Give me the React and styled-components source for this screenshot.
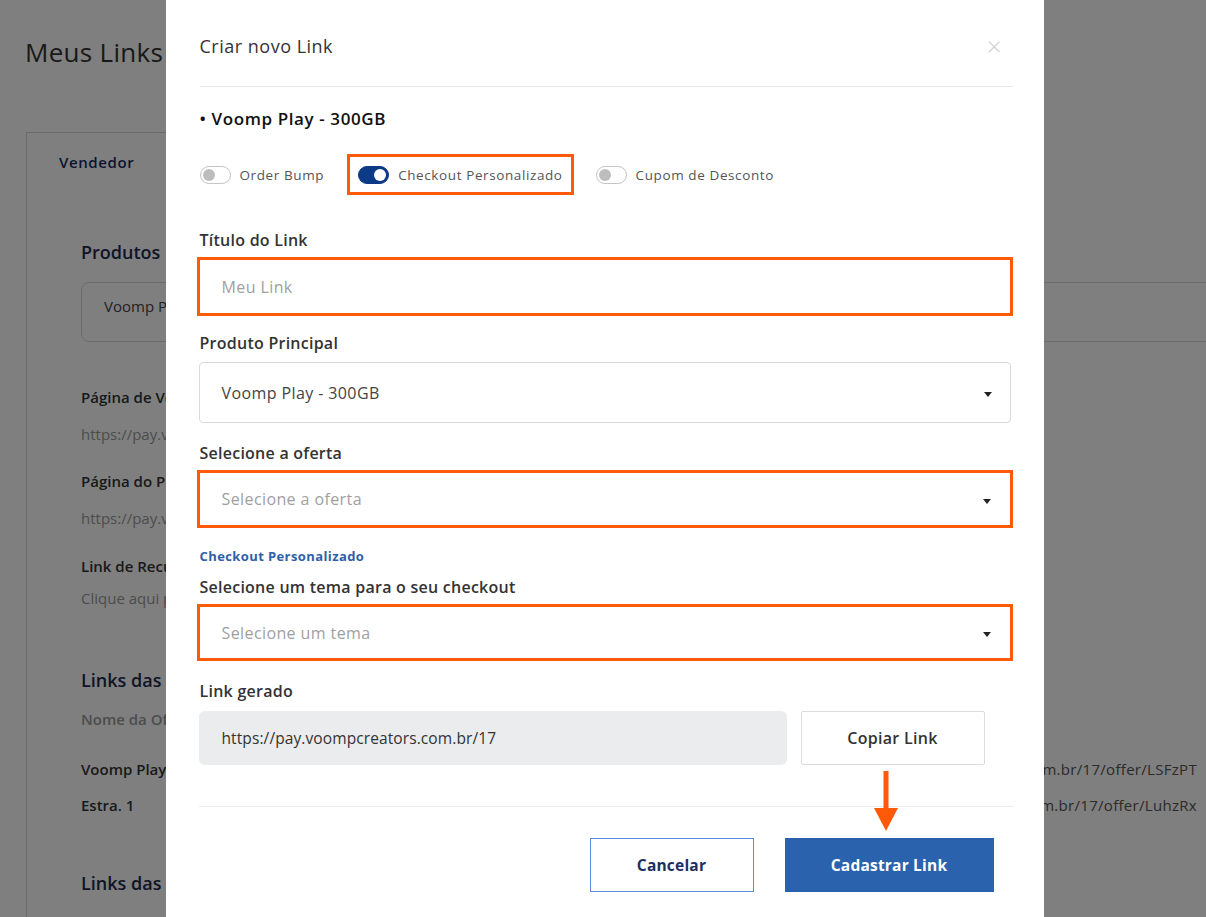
import React from "react";
import styled, { createGlobalStyle } from "styled-components";

const GlobalStyle = createGlobalStyle`
  html, body {
    margin: 0;
    padding: 0;
    height: 100%;
    overflow: hidden;
  }
  body {
    font-family: "Open Sans", "Noto Sans", sans-serif;
    background: #fff;
    color: #333;
  }
  * {
    box-sizing: border-box;
  }
`;

/* ---------- background page ---------- */

const Page = styled.div`
  width: 1240px;
  padding: 32px 0 0 25px;
`;

const PageTitle = styled.h1`
  margin: 0;
  font-size: 26px;
  font-weight: 500;
  line-height: 40px;
  color: #333;
  letter-spacing: 0.3px;
`;

const Card = styled.div`
  margin: 60px 0 0 1px;
  border-left: 1px solid #d6d6d6;
  height: 900px;
`;

const TabBar = styled.div`
  border-top: 1px solid #d6d6d6;
  width: 140px;
  padding: 19px 0 0 32px;
  font-size: 15px;
  font-weight: 600;
  line-height: 20px;
  letter-spacing: 0.6px;
  color: #142c66;
`;

const CardBody = styled.div`
  padding: 68px 0 0 54px;
`;

const SectionTitle = styled.div`
  font-size: 18px;
  font-weight: 600;
  line-height: 24px;
  color: #1d2b4f;
  margin-top: ${(p) => p.$top || 0}px;
`;

const BgSelect = styled.div`
  margin-top: 18px;
  height: 60px;
  border: 1px solid #d6d6d6;
  border-radius: 8px;
  display: flex;
  align-items: center;
  padding: 0 22px 12px;
  font-size: 15px;
  color: #444;
`;

const BgLabel = styled.div`
  font-size: 15px;
  font-weight: 600;
  line-height: 20px;
  color: ${(p) => p.$color || "#333"};
  margin-top: ${(p) => p.$top || 0}px;
`;

const BgValue = styled.div`
  font-size: 15px;
  line-height: 20px;
  color: #999;
  margin-top: ${(p) => p.$top || 0}px;
`;

const BgRow = styled.div`
  display: flex;
  justify-content: space-between;
  width: 1116px;
  font-size: 15px;
  line-height: 20px;
  margin-top: ${(p) => p.$top || 0}px;
`;

const BgCell = styled.span`
  font-weight: 600;
  color: #333;
`;

const BgUrl = styled.span`
  color: #555;
  letter-spacing: 0.3px;
`;

/* ---------- modal ---------- */

const Overlay = styled.div`
  position: fixed;
  inset: 0;
  background: rgba(0, 0, 0, 0.5);
  display: flex;
  justify-content: center;
  align-items: stretch;
`;

const Modal = styled.div`
  width: 878px;
  margin-left: 3px;
  background: #fff;
  padding: 0 31px 0 34px;
`;

const Header = styled.div`
  display: flex;
  justify-content: space-between;
  align-items: center;
  padding: 34px 0 28px;
  border-bottom: 1px solid #e8e8e8;
`;

const Title = styled.h2`
  margin: 0;
  font-size: 18px;
  font-weight: 500;
  line-height: 24px;
  letter-spacing: 0.5px;
  color: #333;
`;

const Close = styled.span`
  font-size: 26px;
  line-height: 24px;
  color: #d0d0d0;
  margin-right: 11px;
  font-weight: 300;
`;

const Product = styled.div`
  margin-top: 21px;
  font-size: 17px;
  font-weight: 600;
  line-height: 22px;
  letter-spacing: 0.6px;
  color: #111;
`;

const ToggleRow = styled.div`
  margin-top: 24px;
  display: flex;
  align-items: center;
  gap: 22px;
  height: 41px;
`;

const ToggleItem = styled.label`
  display: flex;
  align-items: center;
  gap: 9px;
  height: 41px;
  font-size: 13.5px;
  color: #555;
  letter-spacing: 0.6px;
  ${(p) =>
    p.$mark &&
    `
    border: 3px solid #ff5a0a;
    padding: 0 8px 0 8px;
    margin-left: 1px;
  `}
`;

const Switch = styled.span`
  position: relative;
  width: 31px;
  height: 18px;
  border-radius: 9px;
  border: 1px solid ${(p) => (p.$on ? "#0c3a86" : "#c4c4c4")};
  background: ${(p) => (p.$on ? "#0c3a86" : "#fff")};
  flex-shrink: 0;

  &::after {
    content: "";
    position: absolute;
    top: 2px;
    left: ${(p) => (p.$on ? "15px" : "2px")};
    width: 12px;
    height: 12px;
    border-radius: 50%;
    background: ${(p) => (p.$on ? "#fff" : "#bdbdbd")};
  }
`;

const Label = styled.div`
  font-size: 16px;
  font-weight: 600;
  line-height: 20px;
  letter-spacing: 0.25px;
  color: #333;
  margin-top: ${(p) => p.$top}px;
  margin-bottom: ${(p) => p.$bottom}px;
`;

const Field = styled.div`
  display: flex;
  align-items: center;
  justify-content: space-between;
  height: ${(p) => p.$h}px;
  font-size: 16px;
  letter-spacing: 0.4px;
  color: ${(p) => (p.$empty ? "#a0a0a0" : "#444")};
  ${(p) =>
    p.$mark
      ? `
    margin: 0 0 0 -3px;
    border: 3px solid #ff5a0a;
    padding: 0 19px 0 22px;
  `
      : `
    margin: 0 2px 0 -1px;
    border: 1px solid #d9d9d9;
    border-radius: 4px;
    padding: 0 18px 0 22px;
  `}
`;

const Caret = styled.span`
  width: 0;
  height: 0;
  border-left: 4.5px solid transparent;
  border-right: 4.5px solid transparent;
  border-top: 5px solid #222;
  margin-top: 4px;
`;

const SubLink = styled.div`
  margin-top: 20px;
  font-size: 13px;
  font-weight: 700;
  line-height: 16px;
  letter-spacing: 0.4px;
  color: #2f5fa8;
`;

const LinkRow = styled.div`
  position: relative;
  display: flex;
  gap: 14px;
`;

const GeneratedLink = styled.div`
  width: 588px;
  height: 54px;
  margin-left: -1px;
  background: #ebeced;
  border-radius: 6px;
  display: flex;
  align-items: center;
  padding: 0 23px;
  font-size: 15.5px;
  letter-spacing: 0.1px;
  color: #333;
`;

const CopyButton = styled.button`
  width: 184px;
  height: 54px;
  background: #fff;
  border: 1px solid #dcdcdc;
  border-radius: 2px;
  font-family: inherit;
  font-size: 16px;
  font-weight: 600;
  letter-spacing: 0.3px;
  color: #333;
`;

const Arrow = styled.svg`
  position: absolute;
  left: 674px;
  top: 60px;
`;

const Divider = styled.div`
  margin: 41px 0 0 -1px;
  border-top: 1px solid #ececec;
`;

const Footer = styled.div`
  margin-top: 31px;
  display: flex;
  justify-content: flex-end;
  gap: 31px;
  padding-right: 19px;
`;

const Button = styled.button`
  height: 54px;
  width: ${(p) => p.$w}px;
  font-family: inherit;
  font-size: 15.5px;
  font-weight: 700;
  letter-spacing: 0.2px;
  border-radius: 0;
  border: 1px solid ${(p) => (p.$primary ? "#2b62ad" : "#5b8ad6")};
  background: ${(p) => (p.$primary ? "#2b62ad" : "#fff")};
  color: ${(p) => (p.$primary ? "#fff" : "#1b2f5f")};
`;

const toggles = [
  { label: "Order Bump", on: false },
  { label: "Checkout Personalizado", on: true, mark: true },
  { label: "Cupom de Desconto", on: false },
];

export default function App() {
  return (
    <>
      <GlobalStyle />
      <Page>
        <PageTitle>Meus Links</PageTitle>
        <Card>
          <TabBar>Vendedor</TabBar>
          <CardBody>
            <SectionTitle>Produtos</SectionTitle>
            <BgSelect>Voomp Play - 300GB</BgSelect>
            <BgLabel $top={45}>Página de Vendas</BgLabel>
            <BgValue $top={17}>https://pay.voompcreators.com.br/17</BgValue>
            <BgLabel $top={27}>Página do Produto</BgLabel>
            <BgValue $top={17}>https://pay.voompcreators.com.br/17</BgValue>
            <BgLabel $top={28}>Link de Recuperação</BgLabel>
            <BgValue $top={12}>Clique aqui para gerar</BgValue>
            <SectionTitle $top={60}>Links das Ofertas</SectionTitle>
            <BgLabel $top={17} $color="#999">Nome da Oferta</BgLabel>
            <BgRow $top={30}>
              <BgCell>Voomp Play - 300GB</BgCell>
              <BgUrl>https://pay.voompcreators.com.br/17/offer/LSFzPT</BgUrl>
            </BgRow>
            <BgRow $top={16}>
              <BgCell>Estra. 1</BgCell>
              <BgUrl>https://pay.voompcreators.com.br/17/offer/LuhzRx</BgUrl>
            </BgRow>
            <SectionTitle $top={56}>Links das Campanhas</SectionTitle>
          </CardBody>
        </Card>
      </Page>

      <Overlay>
        <Modal>
          <Header>
            <Title>Criar novo Link</Title>
            <Close>×</Close>
          </Header>

          <Product>• Voomp Play - 300GB</Product>

          <ToggleRow>
            {toggles.map((t) => (
              <ToggleItem key={t.label} $mark={t.mark}>
                <Switch $on={t.on} />
                {t.label}
              </ToggleItem>
            ))}
          </ToggleRow>

          <Label $top={35} $bottom={7}>Título do Link</Label>
          <Field $mark $empty $h={59}>Meu Link</Field>

          <Label $top={17} $bottom={9}>Produto Principal</Label>
          <Field $h={61}>
            Voomp Play - 300GB
            <Caret />
          </Field>

          <Label $top={20} $bottom={7}>Selecione a oferta</Label>
          <Field $mark $empty $h={58}>
            Selecione a oferta
            <Caret />
          </Field>

          <SubLink>Checkout Personalizado</SubLink>

          <Label $top={13} $bottom={7}>Selecione um tema para o seu checkout</Label>
          <Field $mark $empty $h={57}>
            Selecione um tema
            <Caret />
          </Field>

          <Label $top={20} $bottom={10}>Link gerado</Label>
          <LinkRow>
            <GeneratedLink>https://pay.voompcreators.com.br/17</GeneratedLink>
            <CopyButton>Copiar Link</CopyButton>
            <Arrow width="24" height="60" viewBox="0 0 24 60">
              <rect x="9.5" y="0" width="5" height="40" fill="#ff5a0a" />
              <polygon points="0,37 24,37 12,60" fill="#ff5a0a" />
            </Arrow>
          </LinkRow>

          <Divider />

          <Footer>
            <Button $w={164}>Cancelar</Button>
            <Button $w={209} $primary>Cadastrar Link</Button>
          </Footer>
        </Modal>
      </Overlay>
    </>
  );
}
